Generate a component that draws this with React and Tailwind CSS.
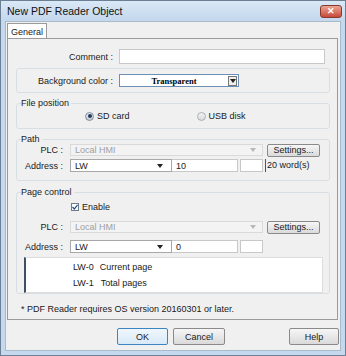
import React from "react";

const F = { fontFamily: '"Liberation Sans Narrow", "Liberation Sans", sans-serif' };

function Caret({ light }) {
  return (
    <svg width="6" height="4" viewBox="0 0 6 4">
      <path d="M0 0 L6 0 L3 4 Z" fill={light ? "#b8b8b8" : "#222"} />
    </svg>
  );
}

function Group({ title, className = "", children }) {
  return (
    <div className={"relative mx-[8px] mr-[7px] rounded-[3px] border border-[#d8dfe4] " + className}>
      {title && (
        <span className="absolute -top-[7px] left-[4px] bg-[#f0f0f0] pr-[2px] leading-[12px] whitespace-nowrap">{title}</span>
      )}
      {children}
    </div>
  );
}

function PlcRow() {
  return (
    <div className="flex items-center h-[12px]">
      <span className="w-[53px] text-right pr-[7px]">PLC :</span>
      <div className="flex items-center justify-between w-[193px] h-[12px] border border-[#dadada] bg-[#f3f3f3] pl-[4px] pr-[6px] text-[#a0a0a0]">
        <span>Local HMI</span>
        <Caret light />
      </div>
      <div className="ml-[4px] w-[53px] h-[13px] flex items-center justify-center rounded-[2px] border border-[#8a8a8a] bg-gradient-to-b from-[#f6f6f6] to-[#dadada]">
        Settings...
      </div>
    </div>
  );
}

function AddrRow({ value, words }) {
  return (
    <div className="flex items-center h-[13px]">
      <span className="w-[53px] text-right pr-[7px]">Address :</span>
      <div className="flex items-center justify-between w-[102px] h-[13px] border border-[#a8a8a8] bg-white pl-[4px] pr-[8px]">
        <span>LW</span>
        <Caret />
      </div>
      <div className="w-[66px] h-[13px] border border-l-0 border-[#c8c8c8] bg-white pl-[4px] flex items-center">{value}</div>
      <div className="ml-[2px] w-[23px] h-[13px] border border-[#c8c8c8] bg-white"></div>
      {words && <span className="ml-[2px] self-start h-[13px] leading-[12px] border-l border-[#555] pl-[1px] whitespace-nowrap">20 word(s)</span>}
    </div>
  );
}

function Btn({ children, w, cls = "" }) {
  return (
    <div className={"h-[17px] rounded-[2px] border flex items-center justify-center " + w + " " + cls}>{children}</div>
  );
}

export default function App() {
  return (
    <div className="w-[346px] h-[356px] flex flex-col border border-[#6d7f92] bg-[#c4d8ee] text-[9px] text-[#1a1a1a] leading-[12px]" style={F}>
      <div className="h-[20px] shrink-0 flex items-center justify-between pl-[6px] pr-[3px] bg-gradient-to-b from-[#dae8f6] to-[#c3d7ed]">
        <span className="text-[10.5px] text-[#111]">New PDF Reader Object</span>
        <div className="w-[22px] h-[13px] rounded-[3px] border border-[#8a3a2a] bg-gradient-to-b from-[#eaa594] to-[#c7473b] flex items-center justify-center text-white text-[9px] font-bold leading-none">
          ✕
        </div>
      </div>
      <div className="flex-1 mx-[4px] mb-[4px] border border-[#a9bacb] bg-[#f0f0f0] flex flex-col">
        <div className="flex pt-[1px] pl-[1px]">
          <div className="h-[16px] w-[40px] flex items-center justify-center border border-b-0 border-[#9a9a9a] bg-white">General</div>
        </div>
        <div className="h-[282px] -mt-[1px] ml-[1px] mr-[2px] border border-[#9a9a9a] bg-[#f0f0f0] flex flex-col">
          <div className="flex items-center mt-[10px] h-[15px]">
            <span className="w-[111px] text-right pr-[6px]">Comment :</span>
            <div className="w-[206px] h-[15px] border border-[#c8c8c8] bg-white"></div>
          </div>
          <Group className="mt-[4px] h-[25px] flex items-center">
            <span className="w-[102px] text-right pr-[6px]">Background color :</span>
            <div className="w-[120px] h-[13px] border border-[#6e8fb5] bg-white flex items-center">
              <span className="flex-1 text-center text-[8.5px] font-semibold text-black" style={{ fontFamily: '"Liberation Serif", serif' }}>Transparent</span>
              <div className="w-[9px] h-[10px] mr-[1px] border border-[#777] bg-[#eeeeee] flex items-center justify-center">
                <Caret />
              </div>
            </div>
          </Group>
          <Group title="File position" className="mt-[10px] h-[26px] flex items-center">
            <div className="ml-[68px] flex items-center">
              <span className="w-[9px] h-[9px] rounded-full border border-[#7f8c99] bg-gradient-to-b from-[#e6e9ee] to-[#c7ccd4] flex items-center justify-center">
                <span className="w-[4px] h-[4px] rounded-full bg-[#1f3a5c]"></span>
              </span>
              <span className="ml-[3px]">SD card</span>
            </div>
            <div className="ml-[67px] flex items-center">
              <span className="w-[9px] h-[9px] rounded-full border border-[#a8b0b8] bg-gradient-to-b from-[#f4f4f4] to-[#dadada]"></span>
              <span className="ml-[3px]">USB disk</span>
            </div>
          </Group>
          <Group title="Path" className="mt-[10px] h-[42px] flex flex-col pt-[4px] gap-[3px]">
            <PlcRow />
            <AddrRow value="10" words />
          </Group>
          <Group title="Page control" className="mt-[11px] h-[102px] flex flex-col pt-[9px]">
            <div className="flex items-center ml-[54px] h-[9px]">
              <span className="w-[8px] h-[8px] border border-[#6f7c8a] bg-white flex items-center justify-center">
                <svg width="6" height="6" viewBox="0 0 6 6"><path d="M0.5 3 L2.3 5 L5.5 0.8" fill="none" stroke="#1f4f8f" strokeWidth="1.2" /></svg>
              </span>
              <span className="ml-[3px]">Enable</span>
            </div>
            <div className="mt-[10px]"><PlcRow /></div>
            <div className="mt-[7px]"><AddrRow value="0" /></div>
            <div className="mt-[4px] ml-[7px] mr-[6px] h-[36px] bg-white border border-[#dddddd] border-l-[2px] border-l-[#3d5166] flex flex-col justify-center gap-[4px] pl-[47px]">
              <div className="flex gap-[6px] whitespace-nowrap"><span>LW-0</span><span>Current page</span></div>
              <div className="flex gap-[7px] whitespace-nowrap"><span>LW-1</span><span>Total pages</span></div>
            </div>
          </Group>
          <div className="mt-[9px] pl-[13px] whitespace-nowrap">* PDF Reader requires OS version 20160301 or later.</div>
        </div>
        <div className="flex items-center mt-[8px]">
          <Btn w="w-[51px] ml-[111px]" cls="border-[#3b86c2] bg-gradient-to-b from-[#f0f7fd] to-[#d8e9f7]">OK</Btn>
          <Btn w="w-[52px] ml-[5px]" cls="border-[#8a8a8a] bg-gradient-to-b from-[#f6f6f6] to-[#dadada]">Cancel</Btn>
          <Btn w="w-[50px] ml-auto mr-[1px]" cls="border-[#8a8a8a] bg-gradient-to-b from-[#f6f6f6] to-[#dadada]">Help</Btn>
        </div>
      </div>
    </div>
  );
}
